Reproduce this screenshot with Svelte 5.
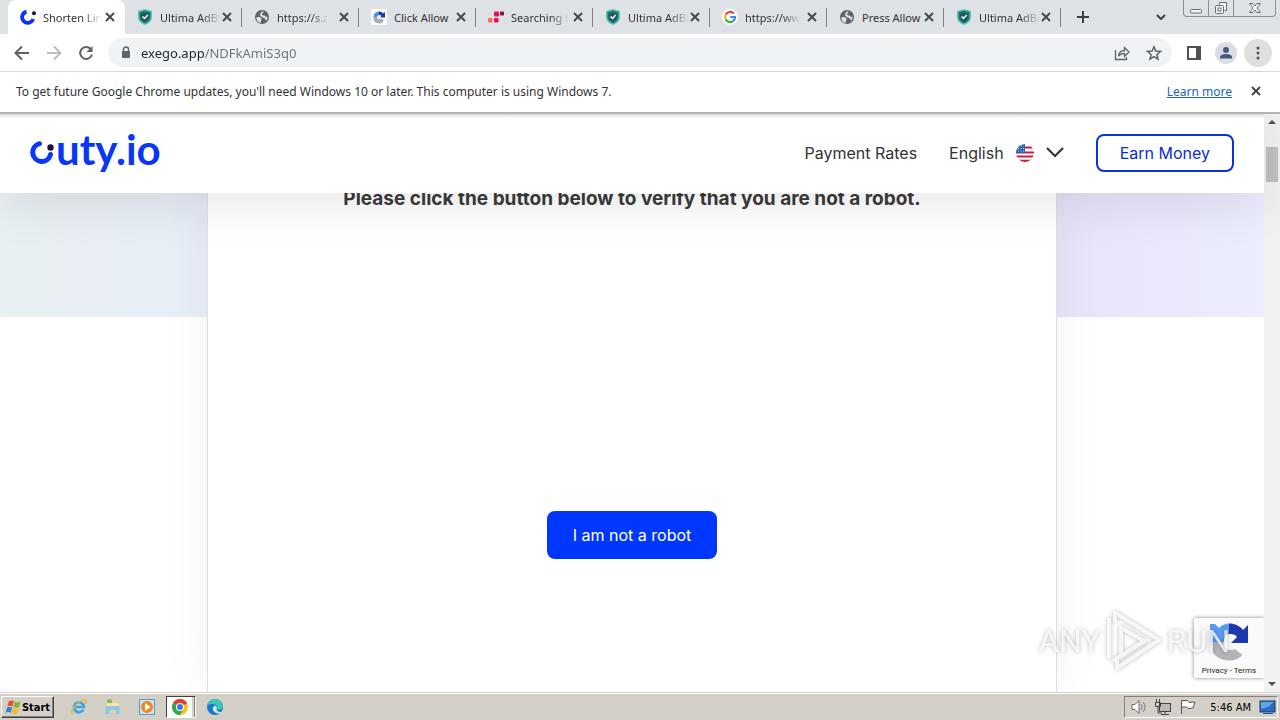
<script>
  const tabs = [
    { title: 'Shorten Lin', icon: 'cuty', active: true, faded: true },
    { title: 'Ultima AdBl', icon: 'shield', faded: true },
    { title: 'https://s.z', icon: 'globe', faded: true },
    { title: 'Click Allow', icon: 'captcha' },
    { title: 'Searching f', icon: 'blocks', faded: true },
    { title: 'Ultima AdBl', icon: 'shield', faded: true },
    { title: 'https://ww', icon: 'google', faded: true },
    { title: 'Press Allow', icon: 'globe' },
    { title: 'Ultima AdBl', icon: 'shield', faded: true }
  ];
  let address = $state('exego.app/NDFkAmiS3q0');
</script>

{#snippet favicon(kind)}
  <svg class="fav" viewBox="0 0 16 16" aria-hidden="true">
    {#if kind === 'cuty'}
      <path d="M6.500 2.600A5.700 5.700 0 1 0 13.200 10" fill="none" stroke="#0a35f5" stroke-width="3.800" />
      <circle cx="14" cy="4.300" r="2" fill="#1c1240" />
    {:else if kind === 'shield'}
      <path d="M8 0 15 2v6c0 4-3.300 6.800-7 8-3.700-1.200-7-4-7-8V2z" fill="#5cc5b4" />
      <path d="M8 1.600 13.500 3v5c0 3.200-2.500 5.200-5.500 6.400C5 13.200 2.500 11.200 2.500 8V3z" fill="#1d776f" />
      <path d="M8 4 11.800 5v3c0 2-1.600 3.700-3.800 4.700C5.800 11.700 4.200 10 4.200 8V5z" fill="#254f62" />
      <path d="m5.500 7.500 2 2 3.200-3.500" fill="none" stroke="#fff" stroke-width="1.500" />
    {:else if kind === 'globe'}
      <circle cx="8" cy="8" r="7" fill="#5f6368" />
      <path d="M2.500 8.500c2-1 4.500-.3 5 1 .4 1-.7 1.200-.5 3l-.5 1.500C4 13.500 2 11 2.500 8.500zM8 2.200c1.500.2 2 .8 1.200 1.600C8 4.500 7.500 5 8.500 6c1 .8 2.500.2 3 1.200.4.700 1.500 1 2 .3.200 2-.3 3-1.300 4-1.200-.2-.7-1.800-2-2.500C8.500 8.500 6.500 7.500 6 6 5.700 4.500 7 4 8 2.200z" fill="#dee1e6" />
    {:else if kind === 'captcha'}
      <rect width="16" height="16" fill="#f8f9fb" />
      <path d="M2.500 8A5.500 5.500 0 0 1 8 2.500V6a2.500 2.500 0 0 0-2 2z" fill="#4a8df0" />
      <path d="M8 2.500c2 0 3.300.8 4.200 2L14 3v5.500H9L10.500 7C10 6.300 9 6 8 6z" fill="#1c3aa9" />
      <path d="M2.500 8H6c.3 1.500 1.200 2.300 2.300 2.300.9 0 1.500-.3 2-.9l2.600 2.200A5.600 5.600 0 0 1 2.500 8z" fill="#a8abb0" />
    {:else if kind === 'blocks'}
      <rect x="6" y="2.500" width="5" height="5" rx="1" fill="#e01553" />
      <rect x="12" y="2.500" width="4" height="4" rx="1" fill="#8b0d3f" />
      <rect x="0" y="9" width="4.500" height="4.500" rx="1" fill="#ff6a4d" />
      <rect x="6" y="9" width="4.500" height="4.500" rx="1" fill="#e01553" />
    {:else}
      <circle cx="8" cy="8" r="8" fill="#fff" />
      <g fill="none" stroke-width="2.200">
        <path d="M11.800 4.600A5 5 0 0 0 3.600 5.700" stroke="#ea4335" />
        <path d="M3.600 5.700a5 5 0 0 0 0 4.600" stroke="#fbbc05" />
        <path d="M3.600 10.300a5 5 0 0 0 7.800 1.500" stroke="#34a853" />
        <path d="M11.400 11.800A5 5 0 0 0 13 8H8.200" stroke="#4285f4" />
      </g>
    {/if}
  </svg>
{/snippet}

{#snippet cross()}
  <svg class="cross" viewBox="0 0 10 10" aria-hidden="true"><path d="m1 1 8 8M9 1 1 9" /></svg>
{/snippet}

{#snippet captchaLogo()}
  <svg class="captcha-logo" viewBox="0 0 40 40" aria-hidden="true">
    <path d="M1 20V2h5l4 4c3-3 6-4.500 10-4.500V12c-3 1-5 4-5 8z" fill="#5b9bf3" />
    <path d="M20 1.500c6 0 11 2.500 14 6.500l5-5v18H22l6-6c-2-3-5-3-8-3z" fill="#1c3aa9" />
    <path d="M1 20h13c0 5 3 8 7 8 2 0 4-.6 5-1l7.500 6c-4 4-8 5.500-13 5.500C9 38.500 1 31 1 20z" fill="#b2b4b8" />
  </svg>
{/snippet}

<div class="screen">
  <div class="tabstrip">
    <div class="tabs">
      {#each tabs as tab}
        <div class="tab" class:active={tab.active}>
          <button class="tab-main">
            {@render favicon(tab.icon)}
            <span class="tab-title" class:faded={tab.faded}>{tab.title}</span>
          </button>
          <button class="tab-close" aria-label="Close tab">{@render cross()}</button>
        </div>
      {/each}
    </div>
    <button class="plus" aria-label="New tab">
      <svg viewBox="0 0 12 12" width="12" height="12"><path d="M6 0v12M0 6h12" stroke="#3c4043" stroke-width="2" /></svg>
    </button>
    <button class="tab-search" aria-label="Search tabs">
      <svg viewBox="0 0 10 6" width="10" height="6"><path d="m1 1 4 4 4-4" fill="none" stroke="#3c4043" stroke-width="2" /></svg>
    </button>
    <div class="window-buttons">
      <button aria-label="Minimize"><svg viewBox="0 0 14 14" width="14" height="14"><rect x="1.500" y="8.500" width="11" height="3.500" rx="1" /></svg></button>
      <button aria-label="Restore"><svg viewBox="0 0 14 14" width="14" height="14"><path d="M5.500 3.500v-2h7v8h-2" /><rect x="1.500" y="4.500" width="8" height="8" rx="1" /><rect x="4" y="7" width="3" height="3" /></svg></button>
      <button class="wide" aria-label="Close window"><svg viewBox="0 0 14 14" width="14" height="14"><path d="M1.500 2.500h3.500l2 2.500 2-2.500h3.500L9 7l3.500 4.500H9L7 9l-2 2.500H1.500L5 7z" /></svg></button>
    </div>
  </div>

  <div class="toolbar">
    <button aria-label="Back"><svg viewBox="0 0 16 16"><path d="M15 8H2M8 1.500 1.500 8 8 14.500" fill="none" stroke="#5f6368" stroke-width="2" /></svg></button>
    <button aria-label="Forward"><svg viewBox="0 0 16 16"><path d="M1 8h13M8 1.500 14.500 8 8 14.500" fill="none" stroke="#babcbe" stroke-width="2" /></svg></button>
    <button aria-label="Reload"><svg viewBox="0 0 16 16"><path d="M12.700 4A6 6 0 1 0 14 9.500" fill="none" stroke="#5f6368" stroke-width="2" /><path d="M14.500 1v6h-6z" fill="#5f6368" /></svg></button>
    <div class="omnibox">
      <svg class="lock" viewBox="0 0 10 13" aria-hidden="true"><path d="M2.500 6V3.500a2.500 2.500 0 0 1 5 0V6" fill="none" stroke="#5f6368" stroke-width="1.500" /><rect x="1" y="5" width="8" height="7" rx="1" fill="#5f6368" /></svg>
      <input aria-label="Address" bind:value={address} />
      <button aria-label="Share"><svg viewBox="0 0 16 16" fill="none" stroke="#5f6368" stroke-width="1.300"><path d="M1.500 5v9.500h11V12" /><path d="M4.500 11c.5-3.500 2.500-5.500 6-5.500V2.500L15 7l-4.500 4.500V8.500C8 8.500 6 9 4.500 11z" /></svg></button>
      <button aria-label="Bookmark"><svg viewBox="0 0 16 16"><path d="m8 1.800 1.800 4.300 4.700.4-3.600 3 1.100 4.600L8 11.600l-4 2.500 1.100-4.600-3.600-3 4.700-.4z" fill="none" stroke="#5f6368" stroke-width="1.500" /></svg></button>
    </div>
    <button class="side" aria-label="Side panel"><svg viewBox="0 0 16 16"><path d="M1 1h14v14H1zM3 3v10h7V3z" fill="#4d5156" fill-rule="evenodd" /></svg></button>
    <button class="avatar" aria-label="Profile"><svg viewBox="0 0 16 16"><circle cx="8" cy="5" r="3" fill="#4a5878" /><path d="M2 13.500V12c0-2 3-3 6-3s6 1 6 3v1.500z" fill="#4a5878" /></svg></button>
    <button class="menu" aria-label="Menu"><svg viewBox="0 0 16 16" fill="#4d5156"><circle cx="8" cy="3" r="1.500" /><circle cx="8" cy="8" r="1.500" /><circle cx="8" cy="13" r="1.500" /></svg></button>
  </div>

  <div class="infobar">
    <p>To get future Google Chrome updates, you'll need Windows 10 or later. This computer is using Windows 7.</p>
    <a href="#learn">Learn more</a>
    <button aria-label="Dismiss">{@render cross()}</button>
  </div>

  <div class="viewport">
    <div class="page">
      <header>
        <a class="logo" href="#home" aria-label="cuty.io">
          <svg viewBox="0 0 26 26" width="26" height="26" aria-hidden="true">
            <path d="M9.500 4.700A9 9 0 1 0 20.500 15.500" fill="none" stroke="#0a37f5" stroke-width="5" stroke-linecap="round" />
            <circle cx="20.500" cy="8.500" r="3.200" fill="#1c1240" />
          </svg>
          <span>uty.io</span>
        </a>
        <nav>
          <a href="#rates">Payment Rates</a>
          <button class="language" aria-haspopup="menu">
            <span>English</span>
            <svg viewBox="0 0 18 18" width="18" height="18" aria-hidden="true">
              <defs><clipPath id="round"><circle cx="9" cy="9" r="9" /></clipPath></defs>
              <g clip-path="url(#round)">
                <rect width="18" height="18" fill="#fff" />
                <path d="M0 3.500h18M0 8.500h18M0 12.500h18M0 16.800h18" stroke="#d3183b" stroke-width="2.200" />
                <rect width="9" height="9" fill="#2166b5" />
                <path d="M2 4.500h6M2 7h6M5 2h3" stroke="#c9dcf2" stroke-dasharray="1 1.500" />
              </g>
            </svg>
            <svg viewBox="0 0 18 11" width="18" height="11" aria-hidden="true"><path d="m1 1 8 8 8-8" fill="none" stroke="#333" stroke-width="2.200" /></svg>
          </button>
          <button class="earn">Earn Money</button>
        </nav>
      </header>
      <main>
        <section class="card">
          <h1>Please click the button below to verify that you are not a robot.</h1>
          <button class="verify">I am not a robot</button>
        </section>
        <aside class="badge">
          {@render captchaLogo()}
          <div><a href="#privacy">Privacy</a> - <a href="#terms">Terms</a></div>
        </aside>
      </main>
    </div>
    <div class="scrollbar" aria-hidden="true">
      <svg viewBox="0 0 8 4" width="8" height="4"><path d="m0 4 4-4 4 4z" fill="#505050" /></svg>
      <div class="track"><div class="thumb"></div></div>
      <svg viewBox="0 0 8 4" width="8" height="4"><path d="m0 0 4 4 4-4z" fill="#505050" /></svg>
    </div>
    <div class="watermark">
      <span>ANY</span>
      <svg viewBox="0 0 58 62" width="58" height="62" aria-hidden="true">
        <path d="M4 48V8M10 12V3l44 27-42 28v-9M16 46V18l23 13-31 20" fill="none" stroke="#fff" stroke-width="4" stroke-linejoin="round" />
      </svg>
      <span>RUN</span>
    </div>
  </div>

  <footer class="taskbar">
    <button class="start">
      <svg viewBox="0 0 18 16" width="17" height="16" aria-hidden="true">
        <path d="M4 2c2-1.500 4-1 5.500 0L8 7.500c-1.500-1-3.500-1-5.500 0z" fill="#e8532c" />
        <path d="M10.500 2.500c2 1 4 1 6 0L15 8c-2 1-4 1-6 0z" fill="#7cb82f" />
        <path d="M2.200 8.500c2-1 4-1 5.500 0L6.200 14c-1.700-1-3.700-1-5.700 0z" fill="#2e86d6" />
        <path d="M8.700 9c2 1 4 1 6 0l-1.500 5.500c-2 1-4 1-6 0z" fill="#f7bd1e" />
      </svg>
      <span>Start</span>
    </button>
    <div class="launchers">
      <button aria-label="Internet Explorer"><svg viewBox="0 0 18 18"><path d="M13.500 11.500A5 5 0 1 1 14 9H5" fill="none" stroke="#3aa5e4" stroke-width="2.700" /><path d="M3 15C-1 17 4 7 10 3.500S17.500 3 15 6" fill="none" stroke="#e4b83b" stroke-width="1.300" /></svg></button>
      <button aria-label="Explorer"><svg viewBox="0 0 18 18"><path d="M2 3h6l1 1.500h6V13H2z" fill="#f2d675" /><path d="M3 1.500h5V5H3z" fill="#83b95d" /><path d="M3 5h12v4H3z" fill="#f8e7a4" /><path d="M1.500 8h14v8H12v-4H5.500v4h-4z" fill="#8ec5e6" /></svg></button>
      <button aria-label="Media Player"><svg viewBox="0 0 18 18"><rect x="1.500" y="1.500" width="15" height="15" fill="#c7e3f6" stroke="#5b9ccc" /><circle cx="9" cy="9" r="6" fill="#f28a1b" /><path d="m7 5 5.500 4L7 13z" fill="#fff" /></svg></button>
      <button class="running" aria-label="Chrome"><svg viewBox="0 0 18 18"><circle cx="9" cy="9" r="8" fill="#fbc116" /><path d="M9 9 2.070 5A8 8 0 0 1 15.930 5z" fill="#e33b2e" /><path d="M9 9 2.070 5A8 8 0 0 0 9 17l3.500-6z" fill="#2da94f" /><path d="M9 5h6.930L9 9z" fill="#e33b2e" /><circle cx="9" cy="9" r="4" fill="#fff" /><circle cx="9" cy="9" r="3" fill="#3b78e7" /></svg></button>
      <button aria-label="Edge"><svg viewBox="0 0 18 18"><circle cx="9" cy="9" r="8" fill="#1877c9" /><path d="M1 8C2 3 5.500 1 9 1c5 0 8 3.500 8 7 0 3-3 4.500-6 3.500 1-1.500.5-4-2-5C6 5.500 3 6 1 8z" fill="#3fc6b4" /><path d="M8 8c-3 3 0 7 4 7.500 1.500 0 3-.5 4-1.500-2 .5-7-1-5-4.500C10.500 8 9 7.500 8 8z" fill="#cfe8ee" /></svg></button>
    </div>
    <div class="tray">
      <svg viewBox="0 0 18 18"><path d="M2 6.500h3l4-4v13l-4-4H2z" fill="#fff" stroke="#666" /><path d="M11 6c1.500 2 1.500 4 0 6M13 4c2.500 3 2.500 7 0 10" fill="none" stroke="#777" /></svg>
      <svg viewBox="0 0 18 18"><rect x="5.500" y="5.500" width="11" height="8" fill="#bbb" stroke="#444" /><path d="M7 16.500h8M11 14v2M2.500 1v3M5.500 1v3M1.500 4.500h5v4h-5zM4 9v6h4" fill="none" stroke="#444" /></svg>
      <svg viewBox="0 0 18 18"><path d="M3.500 16V2.500h6l1.500 2 6-.5-2 6-5 .5-1.500-1.500h-5" fill="#fff" stroke="#555" /></svg>
      <time>5:46 AM</time>
      <svg class="desktop" viewBox="0 0 18 18"><rect x="1" y="3" width="15" height="11" fill="#2a6cc0" stroke="#183d77" /><path d="M2 4h13l-6 5-7 2z" fill="#5fa5e8" /><path d="M4 15.500h10" stroke="#27558f" /></svg>
    </div>
  </footer>
</div>

<style>
  :global(body) { margin: 0; }
  .screen {
    display: flex;
    flex-direction: column;
    height: 100vh;
    overflow: hidden;
    font-family: "Noto Sans", sans-serif;
    font-size: 12px;
    color: #333;
    background: #fff;
  }
  button {
    display: flex;
    align-items: center;
    justify-content: center;
    padding: 0;
    border: 0;
    background: none;
    font: inherit;
    color: inherit;
    flex: none;
  }
  svg { display: block; flex: none; }

  .tabstrip { display: flex; height: 34px; padding: 0 4px 0 8px; background: #dee1e6; }
  .tabs { display: flex; }
  .tab { display: flex; align-items: center; box-sizing: border-box; width: 117px; padding: 0 7px 0 12px; position: relative; }
  .tab:not(.active)::after { content: ""; position: absolute; right: 0; top: 8px; width: 1px; height: 19px; background: #808387; }
  .tab.active { background: #fff; border-radius: 8px 8px 0 0; }
  .tab-main { flex: 1; min-width: 0; height: 34px; justify-content: flex-start; gap: 7px; }
  .fav { width: 16px; height: 16px; }
  .tab-title { white-space: nowrap; font-size: 11px; }
  .faded { mask-image: linear-gradient(to right, #000 68%, transparent 100%); }
  .tab-close { width: 16px; height: 16px; margin-left: 2px; }
  .cross { width: 10px; height: 10px; fill: none; stroke: #45494d; stroke-width: 2; }
  .plus { width: 28px; margin-left: 8px; }
  .tab-search { width: 28px; margin-left: auto; margin-right: 8px; }
  .window-buttons { display: flex; height: 17px; box-sizing: border-box; border: 1px solid #8c9096; border-top: 0; border-radius: 0 0 4px 4px; }
  .window-buttons button { width: 25px; border-right: 1px solid #8c9096; }
  .window-buttons .wide { width: 41px; border-right: 0; }
  .window-buttons svg { fill: #f3f4f6; stroke: #686c72; }

  .toolbar { display: flex; align-items: center; height: 37px; padding: 0 8px; border-bottom: 1px solid #d5d7da; }
  .toolbar button { width: 28px; height: 28px; margin-right: 4px; }
  .toolbar svg { width: 16px; height: 16px; }
  .omnibox { display: flex; align-items: center; flex: 1; min-width: 0; height: 29px; margin: 0 8px 0 4px; padding-left: 13px; border-radius: 15px; background: #f0f3f5; }
  .omnibox .lock { width: 10px; height: 13px; }
  .omnibox input {
    flex: 1;
    min-width: 0;
    margin-left: 10px;
    padding: 0;
    border: 0;
    outline: 0;
    font: 13px "Noto Sans", sans-serif;
    background: linear-gradient(to right, #202124 63px, #6b6f74 63px);
    background-clip: text;
    -webkit-text-fill-color: transparent;
  }
  .toolbar .side { margin-right: 0; }
  .toolbar .avatar { width: 22px; height: 22px; margin: 0 7px; border-radius: 50%; background: #dadde3; }
  .toolbar .menu { margin: 0; border-radius: 50%; background: #dfdfdf; }

  .infobar { display: flex; align-items: center; box-sizing: border-box; height: 42px; padding: 0 16px 2px; border-bottom: 2px solid #b4b4b4; }
  .infobar p { margin: 0; flex: 1; }
  .infobar a { color: #1a66b8; }
  .infobar button { width: 16px; height: 16px; margin: 0 0 0 16px; }

  .viewport { position: relative; display: flex; flex: 1; min-height: 0; overflow: hidden; }
  .page { display: flex; flex-direction: column; flex: 1; min-width: 0; font-family: Inter, sans-serif; font-size: 16px; }
  header { display: flex; align-items: center; justify-content: space-between; box-sizing: border-box; height: 79px; padding: 0 30px 2px; background: linear-gradient(#d8d8d8, #fff 4px); position: relative; z-index: 1; box-shadow: 0 10px 50px rgb(0 0 0 / 10%); }
  .logo { display: flex; align-items: center; padding-bottom: 8px; text-decoration: none; color: #0a37f5; font: 700 42px/48px Lato, sans-serif; }
  .logo svg { align-self: flex-end; margin-bottom: 8px; }
  nav { display: flex; align-items: center; gap: 32px; }
  nav a { color: #333; text-decoration: none; }
  .language { gap: 12px; }
  .earn { padding: 0 22px; height: 38px; border: 2px solid #0a35d5; border-radius: 8px; color: #0a2fc8; }

  main {
    position: relative;
    display: flex;
    justify-content: center;
    flex: 1;
    min-height: 0;
    background:
      linear-gradient(to right, #e9f0f3, #e8eef7 16%, #e8e4fa 84%, #ecedff) no-repeat top / 100% 124px,
      #fff;
  }
  .card {
    display: flex;
    flex-direction: column;
    align-items: center;
    box-sizing: border-box;
    width: 100%;
    max-width: 850px;
    border: solid #dedfe2;
    border-width: 0 1px;
    background: #fff;
    box-shadow: 0 0 50px rgb(0 0 0 / 5%);
  }
  h1 { margin: -8px 0 0; font-size: 19px; line-height: 28px; font-weight: 700; color: #3a3a3a; }
  .verify { height: 48px; margin-top: 298px; padding: 0 26px; border-radius: 8px; background: #0037ff; color: #fff; }
  .badge {
    position: absolute;
    right: 0;
    bottom: 14px;
    display: flex;
    flex-direction: column;
    align-items: center;
    justify-content: space-between;
    box-sizing: border-box;
    width: 70px;
    height: 60px;
    padding: 4px 0 2px;
    background: #fafafa;
    box-shadow: 0 0 4px #888;
    font: 8px/10px Roboto, sans-serif;
    color: #222;
  }
  .badge a { color: inherit; text-decoration: none; }
  .captcha-logo { width: 40px; height: 40px; }

  .scrollbar { display: flex; flex-direction: column; align-items: center; width: 16px; padding: 6px 0; box-sizing: border-box; background: #f1f1f1; position: relative; }
  .track { flex: 1; width: 12px; padding-top: 23px; }
  .thumb { height: 35px; background: #c1c1c1; }

  .watermark {
    position: absolute;
    z-index: 2;
    right: 50px;
    bottom: 20px;
    display: flex;
    align-items: center;
    gap: 4px;
    color: rgb(255 255 255 / 75%);
    font: 32px/62px Roboto, sans-serif;
    filter: drop-shadow(0 0 2px rgb(0 0 0 / 35%));
    pointer-events: none;
  }
  .watermark svg { opacity: 0.8; }

  .taskbar { display: flex; align-items: center; height: 26px; padding: 0 2px 0 1px; border-top: 1px solid #fff; background: #d4d0c8; box-shadow: 0 -1px #d4d0c8; color: #000; margin-top: 1px; }
  .start { height: 22px; width: 53px; box-sizing: border-box; border: 1px solid; border-color: #fff #404040 #404040 #fff; box-shadow: inset -1px -1px #808080; font: 700 11px "DejaVu Sans Condensed", sans-serif; }
  .launchers { display: flex; gap: 4px; margin-left: 10px; flex: 1; }
  .launchers button { width: 30px; height: 22px; box-sizing: border-box; }
  .launchers svg { width: 18px; height: 18px; }
  .launchers .running { padding-right: 3px; border: 1px solid; border-color: #404040 #fff #fff #404040; background: #fff; box-shadow: inset -1px 0 #808080, inset -3px 0 #d4d0c8; }
  .tray { display: flex; align-items: center; gap: 6px; height: 22px; box-sizing: border-box; padding: 0 0 0 5px; border: 1px solid; border-color: #808080 #fff #fff #808080; font: 11px "DejaVu Sans Condensed", sans-serif; }
  .tray svg { width: 18px; height: 18px; }
  .tray time { margin: 0 2px 0 8px; }
</style>
